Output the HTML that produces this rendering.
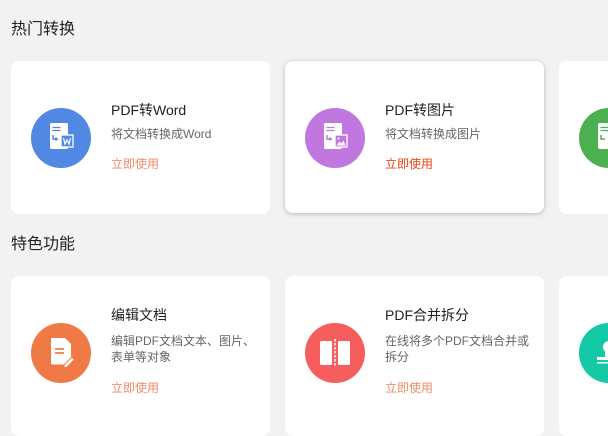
<!DOCTYPE html>
<html><head><meta charset="utf-8"><style>
*{margin:0;padding:0;box-sizing:border-box}
body{width:608px;height:417px;overflow:hidden;background:#f2f2f2;font-family:"Liberation Sans","Noto Sans CJK SC",sans-serif;position:relative}
.h{position:absolute;left:11px;font-size:16px;color:#222;line-height:20px}
.card{position:absolute;width:259px;background:#fff;border-radius:8px}
.shadow{box-shadow:0 1px 5px rgba(0,0,0,.25)}
.c{position:absolute;width:60px;height:60px;border-radius:50%;left:20px}
.t{position:absolute;left:100px;font-size:14px;color:#222;line-height:18px;white-space:nowrap}
.d{position:absolute;left:100px;font-size:12px;color:#666;line-height:16px;width:150px}
.l{position:absolute;left:100px;font-size:12px;color:#f28a63;line-height:16px}
.c svg{position:absolute;left:0;top:0}
</style></head><body>
<div class="h" style="top:20px">热门转换</div>
<div class="h" style="top:235px">特色功能</div>

<div class="card" style="left:11px;top:61px;height:153px">
 <div class="c" style="top:47px;background:#5088e4"><svg width="60" height="60"><rect x="19" y="15" width="18" height="26" rx="1.5" fill="#fff"/><path d="M21.5 19.5h8M21.5 22.5h8" stroke="#5088e4" stroke-width="1.2"/><path d="M22 27v4h4l-1.5-1.5M26 31l-1.5 1.5" stroke="#5088e4" stroke-width="1.5" fill="none"/><rect x="30" y="27" width="12" height="12" fill="#5088e4" stroke="#fff" stroke-width="1.3"/><path d="M32.5 30l1.5 6 2-4 2 4 1.5-6" stroke="#fff" stroke-width="1.2" fill="none"/></svg></div>
 <div class="t" style="top:40px">PDF转Word</div>
 <div class="d" style="top:65px">将文档转换成Word</div>
 <div class="l" style="top:95px">立即使用</div>
</div>
<div class="card shadow" style="left:285px;top:61px;height:152px">
 <div class="c" style="top:47px;background:#c177e0"><svg width="60" height="60"><rect x="19" y="15" width="18" height="26" rx="1.5" fill="#fff"/><path d="M21.5 19.5h8M21.5 22.5h8" stroke="#c177e0" stroke-width="1.2"/><path d="M22 27v4h4l-1.5-1.5M26 31l-1.5 1.5" stroke="#c177e0" stroke-width="1.5" fill="none"/><rect x="30" y="27" width="12" height="12" fill="#c177e0" stroke="#fff" stroke-width="1.3"/><path d="M31.5 37.5l3-4 2 2 2-3 2 5z" fill="#fff"/><circle cx="33.5" cy="30.5" r="1" fill="#fff"/></svg></div>
 <div class="t" style="top:40px">PDF转图片</div>
 <div class="d" style="top:65px">将文档转换成图片</div>
 <div class="l" style="top:95px;color:#f1440f">立即使用</div>
</div>
<div class="card" style="left:559px;top:61px;height:153px">
 <div class="c" style="top:47px;background:#4caf50"><svg width="60" height="60"><rect x="19" y="15" width="18" height="26" rx="1.5" fill="#fff"/><path d="M21.5 19.5h8M21.5 22.5h8" stroke="#4caf50" stroke-width="1.2"/><path d="M22 27v4h4" stroke="#4caf50" stroke-width="1.5" fill="none"/></svg></div>
</div>

<div class="card" style="left:11px;top:276px;height:160px">
 <div class="c" style="top:47px;background:#f07a45"><svg width="60" height="60"><path d="M20 15h14l6 6v19a1.5 1.5 0 0 1-1.5 1.5h-17A1.5 1.5 0 0 1 20 40z" fill="#fff"/><path d="M24 26h9M24 30h9" stroke="#f07a45" stroke-width="1.8"/><path d="M33 42l8-8 2.5 2.5-8 8h-2.5z" fill="#fff" stroke="#f07a45" stroke-width="1"/></svg></div>
 <div class="t" style="top:30px">编辑文档</div>
 <div class="d" style="top:57px">编辑PDF文档文本、图片、表单等对象</div>
 <div class="l" style="top:104px">立即使用</div>
</div>
<div class="card" style="left:285px;top:276px;height:160px">
 <div class="c" style="top:47px;background:#f65d5d"><svg width="60" height="60"><rect x="15" y="18" width="12" height="24" rx="1.5" fill="#fff"/><rect x="33" y="18" width="12" height="24" rx="1.5" fill="#fff"/><path d="M30 16v28" stroke="#fff" stroke-width="1.5" stroke-dasharray="2.5 1.5"/></svg></div>
 <div class="t" style="top:30px">PDF合并拆分</div>
 <div class="d" style="top:57px">在线将多个PDF文档合并或拆分</div>
 <div class="l" style="top:104px">立即使用</div>
</div>
<div class="card" style="left:559px;top:276px;height:160px">
 <div class="c" style="top:47px;background:#13c9a6"><svg width="60" height="60"><circle cx="30" cy="24" r="6" fill="#fff"/><path d="M26 28h8v6h-8z" fill="#fff"/><rect x="18" y="34" width="24" height="3" fill="#fff"/><rect x="18" y="39" width="24" height="1.5" fill="#fff"/></svg></div>
</div>
</body></html>
